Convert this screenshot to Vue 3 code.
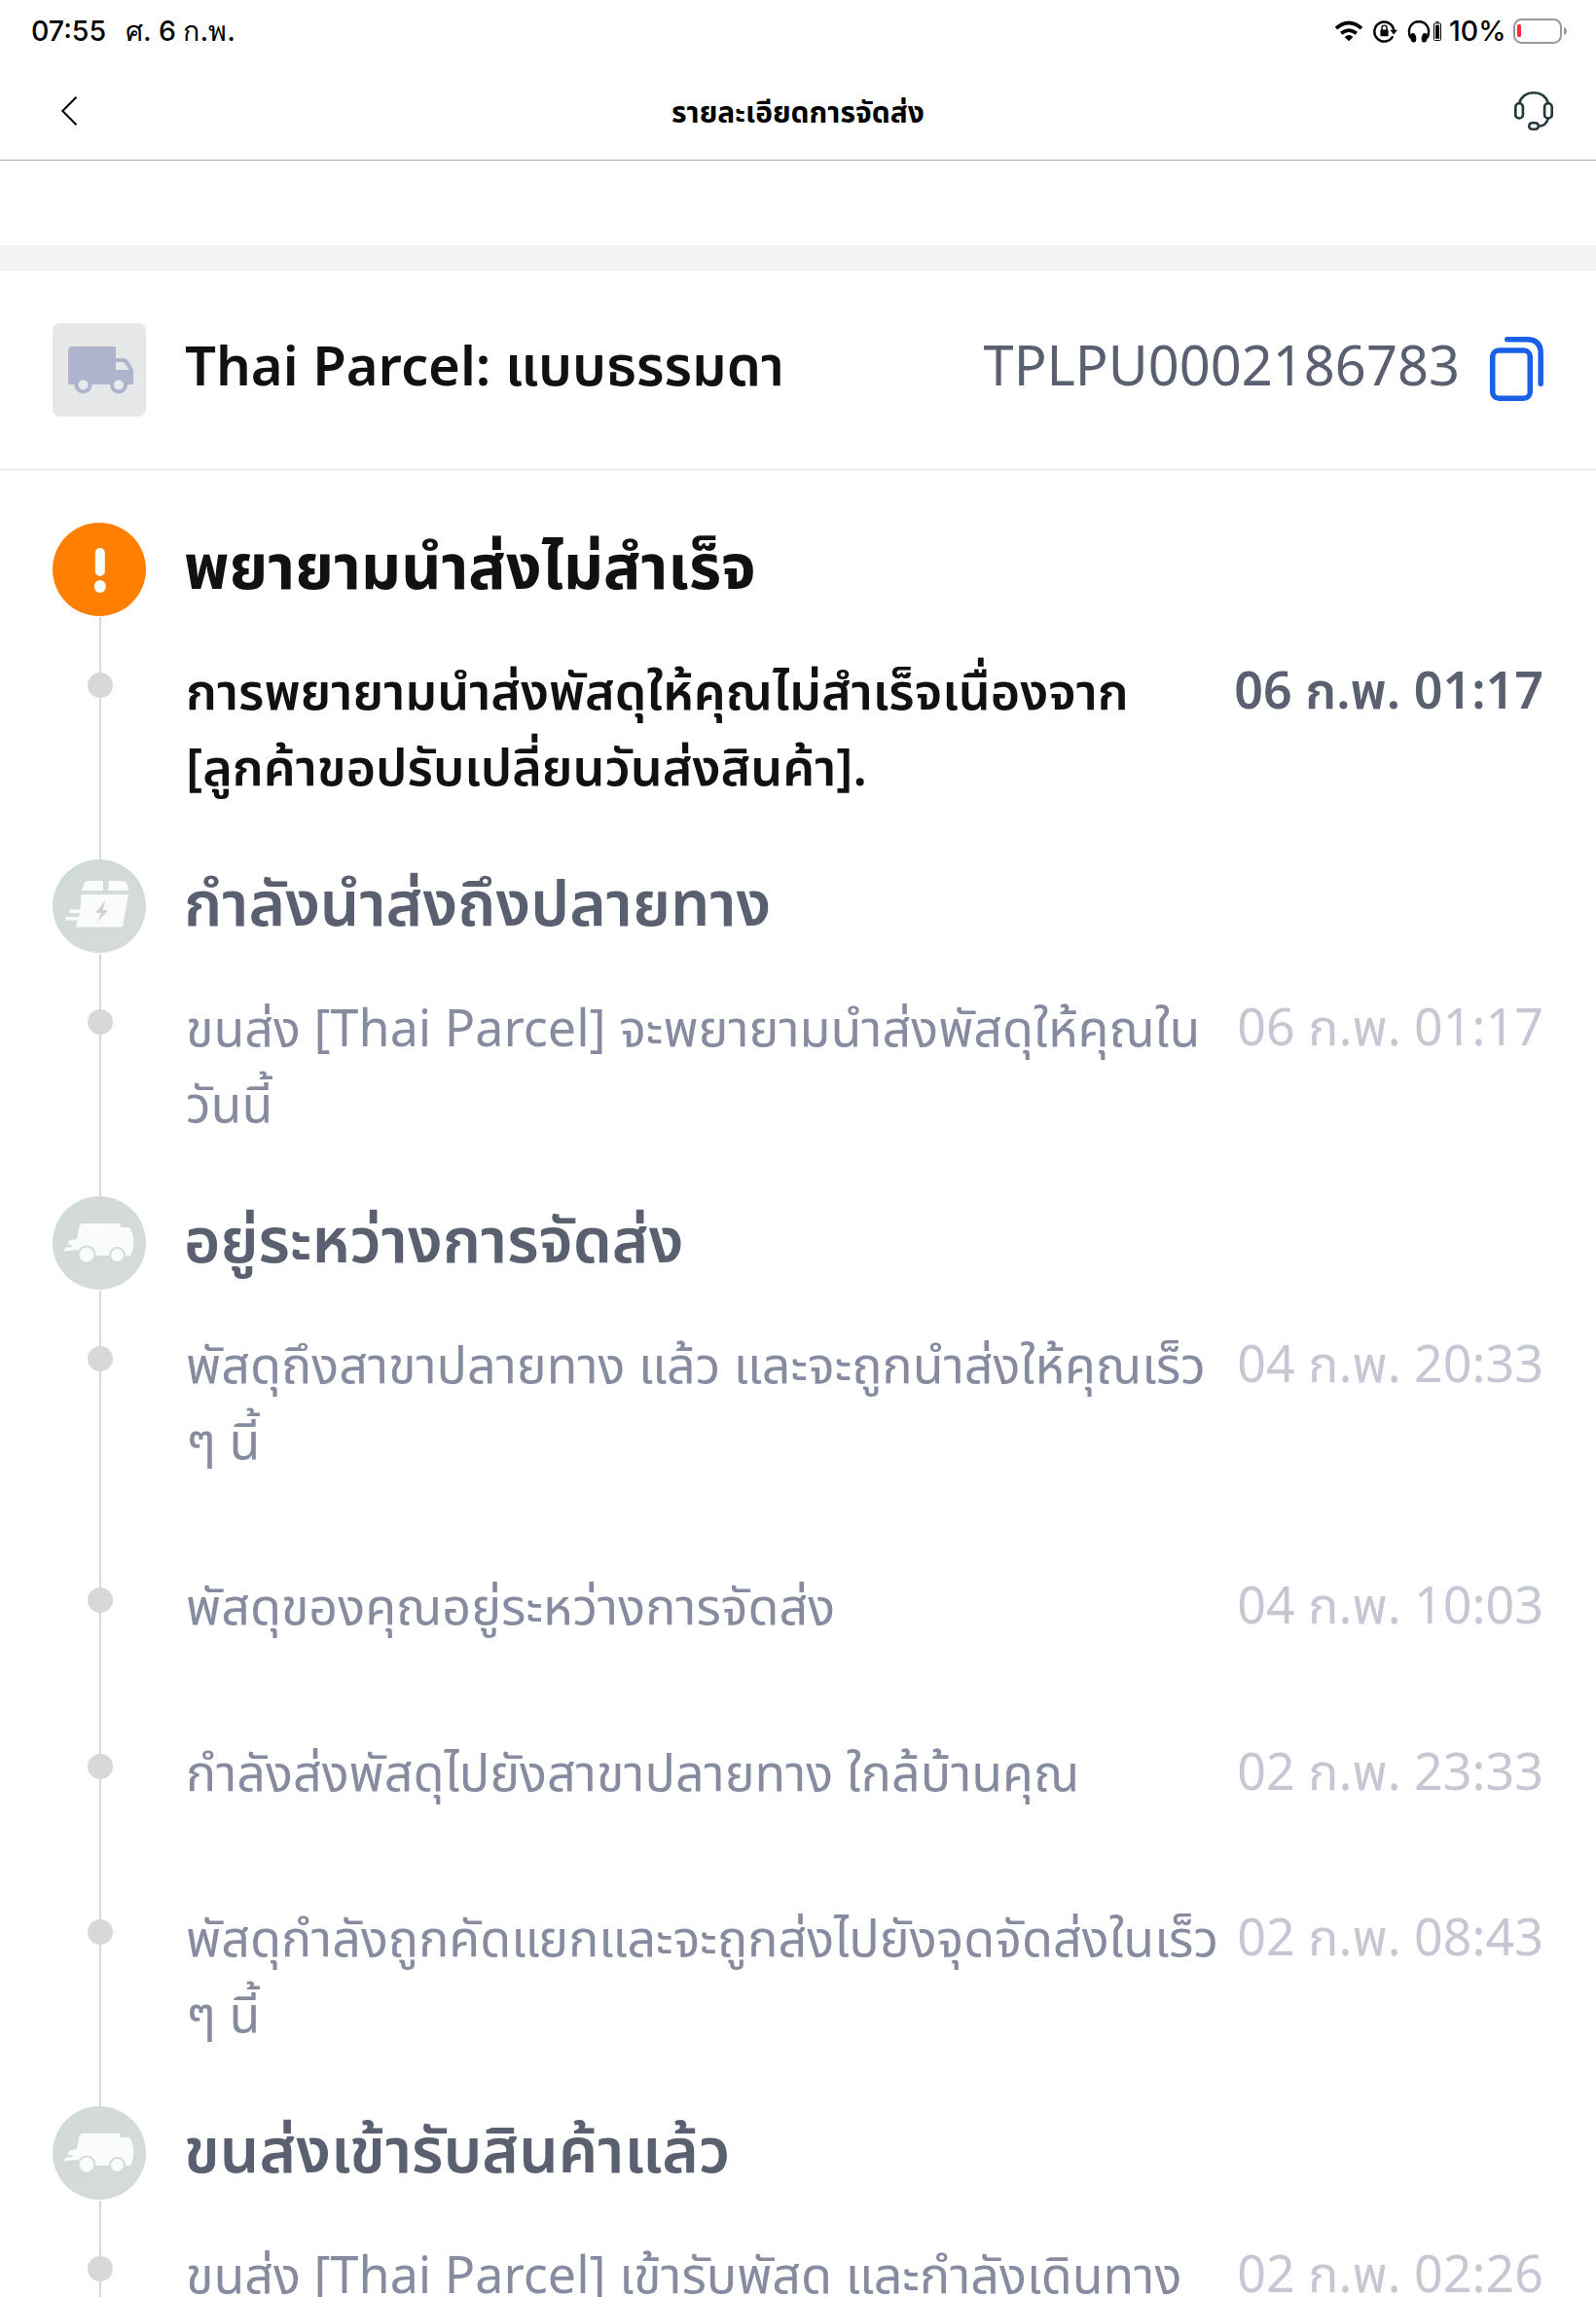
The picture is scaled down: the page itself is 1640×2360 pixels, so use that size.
<template>
  <div class="page">
    <div class="status">
      <span class="clock">07:55</span>
      <span class="date">ศ. 6 ก.พ.</span>
      <div class="status-right">
        <svg class="wifi" viewBox="0 0 30 22">
          <path d="M15 21.2 L10.6 16.9 Q15 13.2 19.4 16.9 Z" />
          <path class="arc" d="M7.2 13.3 Q15 6.9 22.8 13.3" />
          <path class="arc" d="M2 8.1 Q15 -3.1 28 8.1" />
        </svg>
        <svg class="lock" viewBox="0 0 25 24">
          <path class="ring" d="M20.2 17.2 A10 10 0 1 1 21.2 11" />
          <path d="M17.3 10.8 H25 L21.2 15.6 Z" />
          <rect x="7.4" y="10.6" width="8.2" height="6.6" rx="1" />
          <path class="thin" d="M9 11 V8.6 A2.5 2.5 0 0 1 14 8.6 V11" />
        </svg>
        <svg class="phones" viewBox="0 0 24 24">
          <path class="ring" d="M3.4 19 C-0.5 10 4 2.2 12 2.2 C20 2.2 24.5 10 20.6 19" />
          <ellipse cx="6.2" cy="18.8" rx="3" ry="4.8" transform="rotate(-10 6.2 18.8)" />
          <ellipse cx="17.8" cy="18.8" rx="3" ry="4.8" transform="rotate(10 17.8 18.8)" />
        </svg>
        <svg class="mini" viewBox="0 0 8 20">
          <rect x="2.5" y="0" width="3" height="1.2" />
          <rect class="mini-case" x="0.5" y="2" width="7" height="17.5" rx="1" />
          <rect x="2" y="3.8" width="4" height="14" />
        </svg>
        <span class="percent">10%</span>
        <svg class="battery" viewBox="0 0 55 26">
          <rect class="case" x="1" y="1" width="48" height="24" rx="7.5" />
          <path class="nub" d="M52 9 Q55 10 55 13 Q55 16 52 17 Z" />
          <rect class="charge" x="4" y="6" width="4" height="13" rx="1.5" />
        </svg>
      </div>
    </div>

    <header class="nav">
      <svg class="back" viewBox="0 0 18 32">
        <path d="M16.5 1.8 L2.3 16 L16.5 30.2" />
      </svg>
      <h1>รายละเอียดการจัดส่ง</h1>
      <svg class="support" viewBox="0 0 40 40">
        <path d="M5 12 C7.5 5 13 1.3 20 1.3 C27 1.3 32.5 5 35 12" />
        <rect x="1.3" y="12.3" width="7.6" height="15.2" rx="3.6" />
        <rect x="31.1" y="12.3" width="7.6" height="15.2" rx="3.6" />
        <path d="M35 27.5 C33.5 32.5 30.5 35.6 25 35.8" />
        <rect x="15.3" y="32.3" width="9.5" height="6.4" rx="3" />
      </svg>
    </header>

    <div class="band"></div>

    <section class="carrier">
      <div class="truck">
        <svg viewBox="0 0 96 96">
          <path
            fill-rule="evenodd"
            d="M21 24 H65 V36 H73 Q75.5 36 77 38 L82 46 Q83 48 83 50 V63 H16 V29 Q16 24 21 24 Z M65 40 V48 H79 L74 41 Q73.3 40 72 40 Z"
          />
          <circle class="tyre" cx="31.5" cy="63.5" r="7" />
          <circle class="tyre" cx="68" cy="63.5" r="7" />
        </svg>
      </div>
      <h2>Thai Parcel: แบบธรรมดา</h2>
      <span class="number">TPLPU0002186783</span>
      <svg class="copy" viewBox="0 0 55 66">
        <rect x="2.75" y="14" width="38.5" height="49.2" rx="6.5" />
        <path d="M17.8 2.75 H38 Q52.2 2.75 52.2 17 V48.2" />
      </svg>
    </section>

    <section class="timeline">
      <div v-for="(group, g) in groups" :key="g" class="group" :class="{ active: group.active }">
        <div class="group-head">
          <svg class="badge" viewBox="0 0 96 96">
            <defs>
              <linearGradient :id="'tint' + g" x1="0.1" y1="0.1" x2="0.9" y2="0.9">
                <stop offset="0" stop-color="#c9dfc5" />
                <stop offset="0.13" stop-color="#d3dad9" />
                <stop offset="0.9" stop-color="#d6dada" />
                <stop offset="1" stop-color="#cfdfcf" />
              </linearGradient>
            </defs>
            <circle cx="48" cy="48" r="48" :fill="group.active ? '#ff8000' : `url(#tint${g})`" />
            <g v-if="group.icon === 'alert'" class="white">
              <rect x="43.8" y="26" width="10" height="29" rx="5" />
              <rect x="42.8" y="59" width="12" height="13" rx="6" />
            </g>
            <g v-else-if="group.icon === 'box'" class="white">
              <path d="M36 22 H52 V32 H30 L32.5 25 Q33.5 22 36 22 Z" />
              <path d="M58 22 H71 Q75 22 76.5 25 L78.5 32 H57 Z" />
              <path d="M29.5 36 H78 L72 69.5 H24 L26 62.5 H13.5 V59 H27 L28 55 H17.5 V51.5 H28.5 Z" />
              <path class="bolt" d="M54.5 42 L44 55 H50 L46 65 L57 52 H51.5 Z" />
            </g>
            <g v-else class="white">
              <path d="M31 28 H69.5 V32 H78 Q81 33 82 38 Q84.5 47 82 56 L80 61 H26 V55 L11 56.5 L14 52.5 H20 V50 H15.5 L17 45.5 L25 44 L27 33 Q28 28 31 28 Z" />
              <circle class="wheel" cx="35" cy="60" r="8.5" />
              <circle class="wheel" cx="66.5" cy="60.5" r="7.5" />
            </g>
          </svg>
          <h3>{{ group.title }}</h3>
        </div>
        <ul>
          <li v-for="(item, i) in group.items" :key="i">
            <span class="dot"></span>
            <p>{{ item.text }}</p>
            <time>{{ item.time }}</time>
          </li>
        </ul>
      </div>
    </section>
  </div>
</template>

<script setup>
const groups = [
  {
    title: 'พยายามนำส่งไม่สำเร็จ',
    icon: 'alert',
    active: true,
    items: [
      {
        text: 'การพยายามนำส่งพัสดุให้คุณไม่สำเร็จเนื่องจาก\n[ลูกค้าขอปรับเปลี่ยนวันส่งสินค้า].',
        time: '06 ก.พ. 01:17',
      },
    ],
  },
  {
    title: 'กำลังนำส่งถึงปลายทาง',
    icon: 'box',
    items: [
      { text: 'ขนส่ง [Thai Parcel] จะพยายามนำส่งพัสดุให้คุณใน\nวันนี้', time: '06 ก.พ. 01:17' },
    ],
  },
  {
    title: 'อยู่ระหว่างการจัดส่ง',
    icon: 'van',
    items: [
      { text: 'พัสดุถึงสาขาปลายทาง แล้ว และจะถูกนำส่งให้คุณเร็ว\nๆ นี้', time: '04 ก.พ. 20:33' },
      { text: 'พัสดุของคุณอยู่ระหว่างการจัดส่ง', time: '04 ก.พ. 10:03' },
      { text: 'กำลังส่งพัสดุไปยังสาขาปลายทาง ใกล้บ้านคุณ', time: '02 ก.พ. 23:33' },
      { text: 'พัสดุกำลังถูกคัดแยกและจะถูกส่งไปยังจุดจัดส่งในเร็ว\nๆ นี้', time: '02 ก.พ. 08:43' },
    ],
  },
  {
    title: 'ขนส่งเข้ารับสินค้าแล้ว',
    icon: 'van',
    items: [{ text: 'ขนส่ง [Thai Parcel] เข้ารับพัสดุ และกำลังเดินทาง', time: '02 ก.พ. 02:26' }],
  },
]
</script>

<style>
body {
  margin: 0;
  background: #fff;
}
</style>

<style scoped>
.page {
  display: flex;
  flex-direction: column;
  width: 1640px;
  height: 2360px;
  overflow: hidden;
  background: #fff;
  color: #111;
  font-family: "Noto Sans", "Noto Sans Thai", sans-serif;
}

svg {
  display: block;
  flex: none;
}

h1,
h2,
h3,
p,
ul {
  margin: 0;
  padding: 0;
}

.status {
  display: flex;
  align-items: center;
  flex: none;
  box-sizing: border-box;
  height: 64px;
  padding: 0 30px 0 32px;
  color: #000;
  font: 500 28.5px/64px Inter, sans-serif;
}

.clock {
  width: 97px;
}

.status-right {
  display: flex;
  align-items: center;
  margin-left: auto;
}

.wifi {
  width: 30px;
  height: 22px;
  margin-right: 10px;
}

.arc {
  fill: none;
  stroke: #000;
  stroke-width: 3.8;
}

.lock {
  width: 25px;
  height: 24px;
  margin-right: 10px;
}

.ring {
  fill: none;
  stroke: #000;
  stroke-width: 2.4;
}

.thin {
  fill: none;
  stroke: #000;
  stroke-width: 1.4;
}

.phones {
  width: 24px;
  height: 24px;
  margin-right: 3px;
}

.mini {
  width: 8px;
  height: 20px;
  margin-right: 8px;
}

.mini-case {
  fill: none;
  stroke: #000;
}

.percent {
  width: 66px;
}

.battery {
  width: 55px;
  height: 26px;
}

.case {
  fill: none;
  stroke: #999;
  stroke-width: 2;
}

.nub {
  fill: #999;
}

.charge {
  fill: #ff2d37;
}

.nav {
  display: flex;
  align-items: center;
  justify-content: space-between;
  flex: none;
  height: 100px;
  padding: 0 44px 0 62px;
  border-bottom: 1px solid #aaa;
}

.nav h1 {
  padding-top: 2px;
  color: #000;
  font-size: 30px;
  font-weight: 700;
  line-height: 40px;
}

.back {
  width: 18px;
  height: 32px;
  margin-right: 4px;
  fill: none;
  stroke: #000;
  stroke-width: 2;
}

.support {
  width: 40px;
  height: 40px;
  fill: none;
  stroke: #24383e;
  stroke-width: 2.6;
}

.band {
  flex: none;
  height: 26px;
  margin-top: 87px;
  background: #f3f3f3;
}

.carrier {
  display: flex;
  align-items: center;
  flex: none;
  height: 204px;
  padding: 0 54px;
  border-bottom: 1px solid #e0e6ea;
}

.truck {
  width: 96px;
  height: 96px;
  margin-right: 40px;
  border-radius: 8px;
  background: #e6e7e9;
}

.truck svg {
  width: 96px;
  height: 96px;
  fill: #afb4cd;
}

.truck .tyre {
  fill: #e9eaef;
  stroke: #afb4cd;
  stroke-width: 4;
}

.carrier h2 {
  padding-bottom: 12px;
  font-size: 56.2px;
  font-weight: 600;
  line-height: 84px;
}

.number {
  margin-left: auto;
  margin-right: 31px;
  padding-bottom: 12px;
  color: #5a6070;
  font-size: 56px;
  line-height: 84px;
}

.copy {
  width: 55px;
  height: 66px;
  margin-bottom: 2px;
  fill: none;
  stroke: #1a60e6;
  stroke-width: 5.5;
  stroke-linecap: round;
}

.timeline {
  flex: none;
  padding: 54px 54px 0;
}

.group {
  padding-bottom: 57px;
  background: linear-gradient(#d8d8d8, #d8d8d8) 48px 97px / 2px 100% no-repeat;
}

.group-head {
  display: flex;
  align-items: center;
  height: 96px;
  margin-bottom: 37px;
}

.badge {
  width: 96px;
  height: 96px;
  margin-right: 39px;
}

.white {
  fill: #fafcfc;
}

.bolt {
  fill: #d0d3d5;
}

.wheel {
  stroke: #d3dad9;
  stroke-width: 2;
}

.group h3 {
  color: #5a6070;
  font-size: 64px;
  font-weight: 600;
  line-height: 86px;
  padding-bottom: 9px;
}

.active h3 {
  color: #111;
  font-weight: 700;
}

ul {
  display: flex;
  flex-direction: column;
  gap: 92.4px;
  list-style: none;
}

li {
  display: flex;
  align-items: flex-start;
  font-size: 52px;
  line-height: 78px;
}

.dot {
  flex: none;
  width: 26px;
  height: 26px;
  margin: 21px 75px 0 36px;
  border-radius: 50%;
  background: #d8d8d8;
}

li p {
  flex: 1;
  color: #868ba0;
  white-space: pre;
}

time {
  color: #c5c8d2;
  line-height: 76px;
  white-space: nowrap;
}

.active p {
  color: #111;
  font-weight: 600;
}

.active time {
  color: #5a6070;
  font-weight: 600;
}
</style>
